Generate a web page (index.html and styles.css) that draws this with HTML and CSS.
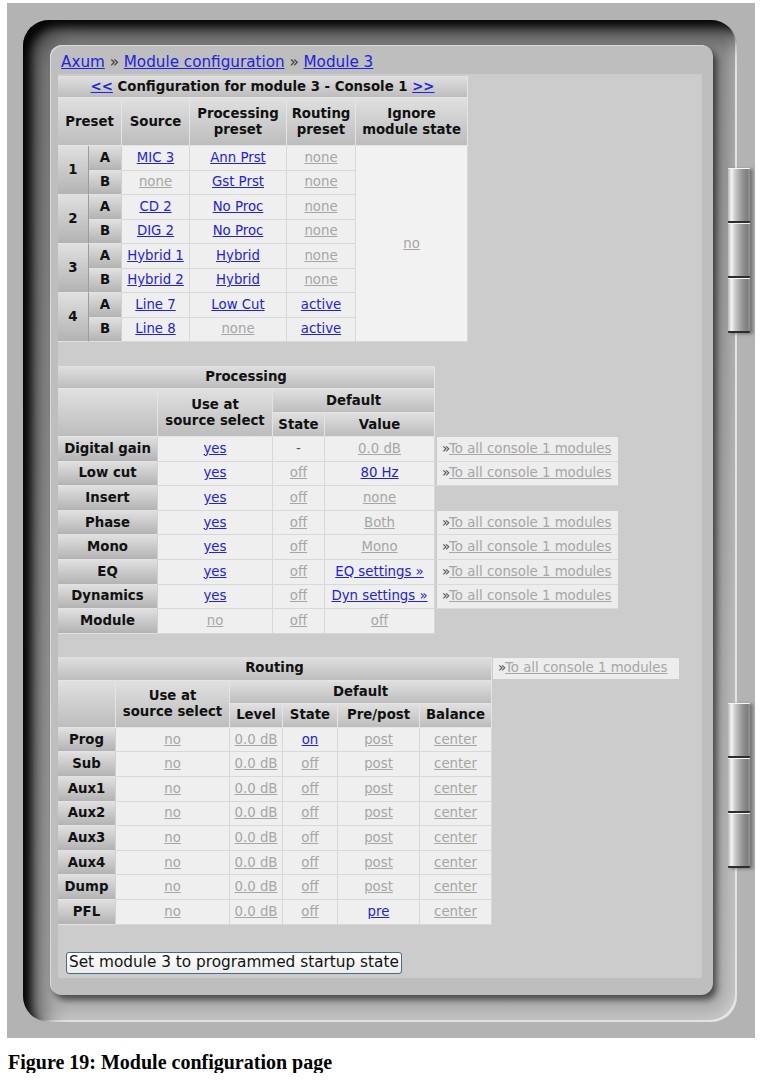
FILE: index.html
```html
<!DOCTYPE html>
<html>
<head>
<meta charset="utf-8">
<title>Module configuration</title>
<link rel="stylesheet" href="styles.css">
</head>
<body>
<div class="shot">
  <div class="frame">
    <div class="panel">
      <div class="crumb"><a class="lk">Axum</a> » <a class="lk">Module configuration</a> » <a class="lk">Module 3</a></div>
      <div class="content">
        <table class="t t1">
          <colgroup><col class="w31"><col class="w33"><col class="w68"><col class="w97"><col class="w69"><col class="w112"></colgroup>
          <tr class="r22"><th colspan="6" class="hd"><a class="lk">&lt;&lt;</a> Configuration for module 3 - Console 1 <a class="lk">&gt;&gt;</a></th></tr>
          <tr class="r48"><th colspan="2" class="hd">Preset</th><th class="hd">Source</th><th class="hd">Processing<br>preset</th><th class="hd">Routing<br>preset</th><th class="hd">Ignore<br>module state</th></tr>
          <tr class="r1"><th rowspan="2" class="rh num">1</th><th class="rh">A</th><td><a class="lk">MIC 3</a></td><td><a class="lk">Ann Prst</a></td><td><a class="dis">none</a></td><td rowspan="8" class="ign"><a class="dis">no</a></td></tr>
          <tr class="r1"><th class="rh">B</th><td><a class="dis">none</a></td><td><a class="lk">Gst Prst</a></td><td><a class="dis">none</a></td></tr>
          <tr class="r1"><th rowspan="2" class="rh num">2</th><th class="rh">A</th><td><a class="lk">CD 2</a></td><td><a class="lk">No Proc</a></td><td><a class="dis">none</a></td></tr>
          <tr class="r1"><th class="rh">B</th><td><a class="lk">DIG 2</a></td><td><a class="lk">No Proc</a></td><td><a class="dis">none</a></td></tr>
          <tr class="r1"><th rowspan="2" class="rh num">3</th><th class="rh">A</th><td><a class="lk">Hybrid 1</a></td><td><a class="lk">Hybrid</a></td><td><a class="dis">none</a></td></tr>
          <tr class="r1"><th class="rh">B</th><td><a class="lk">Hybrid 2</a></td><td><a class="lk">Hybrid</a></td><td><a class="dis">none</a></td></tr>
          <tr class="r1"><th rowspan="2" class="rh num">4</th><th class="rh">A</th><td><a class="lk">Line 7</a></td><td><a class="lk">Low Cut</a></td><td><a class="lk">active</a></td></tr>
          <tr class="r1"><th class="rh">B</th><td><a class="lk">Line 8</a></td><td><a class="dis">none</a></td><td><a class="lk">active</a></td></tr>
        </table>

        <table class="t t2">
          <colgroup><col class="w100"><col class="w115"><col class="w52"><col class="w110"><col class="w183"></colgroup>
          <tr class="r23"><th colspan="4" class="hd">Processing</th></tr>
          <tr class="r24"><th rowspan="2" class="hd"></th><th rowspan="2" class="hd">Use at<br>source select</th><th colspan="2" class="hd">Default</th></tr>
          <tr class="r24"><th class="hd">State</th><th class="hd">Value</th></tr>
          <tr class="r2"><th class="rh">Digital gain</th><td><a class="lk">yes</a></td><td class="txt">-</td><td><a class="dis">0.0 dB</a></td><td class="toall"><span class="ra">»</span><a class="dis">To all console 1 modules</a></td></tr>
          <tr class="r2"><th class="rh">Low cut</th><td><a class="lk">yes</a></td><td><a class="dis">off</a></td><td><a class="lk">80 Hz</a></td><td class="toall"><span class="ra">»</span><a class="dis">To all console 1 modules</a></td></tr>
          <tr class="r2"><th class="rh">Insert</th><td><a class="lk">yes</a></td><td><a class="dis">off</a></td><td><a class="dis">none</a></td><td class="blank"></td></tr>
          <tr class="r2"><th class="rh">Phase</th><td><a class="lk">yes</a></td><td><a class="dis">off</a></td><td><a class="dis">Both</a></td><td class="toall"><span class="ra">»</span><a class="dis">To all console 1 modules</a></td></tr>
          <tr class="r2"><th class="rh">Mono</th><td><a class="lk">yes</a></td><td><a class="dis">off</a></td><td><a class="dis">Mono</a></td><td class="toall"><span class="ra">»</span><a class="dis">To all console 1 modules</a></td></tr>
          <tr class="r2"><th class="rh">EQ</th><td><a class="lk">yes</a></td><td><a class="dis">off</a></td><td><a class="lk">EQ settings »</a></td><td class="toall"><span class="ra">»</span><a class="dis">To all console 1 modules</a></td></tr>
          <tr class="r2"><th class="rh">Dynamics</th><td><a class="lk">yes</a></td><td><a class="dis">off</a></td><td><a class="lk">Dyn settings »</a></td><td class="toall"><span class="ra">»</span><a class="dis">To all console 1 modules</a></td></tr>
          <tr class="r2"><th class="rh">Module</th><td><a class="dis">no</a></td><td><a class="dis">off</a></td><td><a class="dis">off</a></td><td class="blank"></td></tr>
        </table>

        <table class="t t3">
          <colgroup><col class="w58"><col class="w114"><col class="w53"><col class="w55"><col class="w82"><col class="w72"><col class="w187"></colgroup>
          <tr class="r24"><th colspan="6" class="hd">Routing</th><td class="toall top"><span class="ra">»</span><a class="dis">To all console 1 modules</a></td></tr>
          <tr class="r23"><th rowspan="2" class="hd"></th><th rowspan="2" class="hd">Use at<br>source select</th><th colspan="4" class="hd">Default</th></tr>
          <tr class="r24"><th class="hd">Level</th><th class="hd">State</th><th class="hd">Pre/post</th><th class="hd">Balance</th></tr>
          <tr class="r2"><th class="rh">Prog</th><td><a class="dis">no</a></td><td><a class="dis">0.0 dB</a></td><td><a class="lk">on</a></td><td><a class="dis">post</a></td><td><a class="dis">center</a></td></tr>
          <tr class="r2"><th class="rh">Sub</th><td><a class="dis">no</a></td><td><a class="dis">0.0 dB</a></td><td><a class="dis">off</a></td><td><a class="dis">post</a></td><td><a class="dis">center</a></td></tr>
          <tr class="r2"><th class="rh">Aux1</th><td><a class="dis">no</a></td><td><a class="dis">0.0 dB</a></td><td><a class="dis">off</a></td><td><a class="dis">post</a></td><td><a class="dis">center</a></td></tr>
          <tr class="r2"><th class="rh">Aux2</th><td><a class="dis">no</a></td><td><a class="dis">0.0 dB</a></td><td><a class="dis">off</a></td><td><a class="dis">post</a></td><td><a class="dis">center</a></td></tr>
          <tr class="r2"><th class="rh">Aux3</th><td><a class="dis">no</a></td><td><a class="dis">0.0 dB</a></td><td><a class="dis">off</a></td><td><a class="dis">post</a></td><td><a class="dis">center</a></td></tr>
          <tr class="r2"><th class="rh">Aux4</th><td><a class="dis">no</a></td><td><a class="dis">0.0 dB</a></td><td><a class="dis">off</a></td><td><a class="dis">post</a></td><td><a class="dis">center</a></td></tr>
          <tr class="r2"><th class="rh">Dump</th><td><a class="dis">no</a></td><td><a class="dis">0.0 dB</a></td><td><a class="dis">off</a></td><td><a class="dis">post</a></td><td><a class="dis">center</a></td></tr>
          <tr class="r2"><th class="rh">PFL</th><td><a class="dis">no</a></td><td><a class="dis">0.0 dB</a></td><td><a class="dis">off</a></td><td><a class="lk">pre</a></td><td><a class="dis">center</a></td></tr>
        </table>

        <button class="btn" type="button">Set module 3 to programmed startup state</button>
      </div>
    </div>
  </div>
  <div class="hinge h1"><div class="seg"></div><div class="seg"></div><div class="seg"></div></div>
  <div class="hinge h2"><div class="seg"></div><div class="seg"></div><div class="seg"></div></div>
</div>
<div class="cap">Figure 19: Module configuration page</div>
</body>
</html>
```

FILE: styles.css
```css
body {
  margin: 0;
  background: #ffffff;
  font-family: "DejaVu Sans", Verdana, sans-serif;
}

.shot {
  position: relative;
  margin: 3px 0 0 7px;
  width: 748px;
  height: 1035px;
  box-sizing: border-box;
  padding: 17px 0 0 16px;
  background: #b3b3b3;
}

.frame {
  width: 714px;
  height: 1002px;
  box-sizing: border-box;
  padding: 25px 0 0 27px;
  border-radius: 26px;
  background: linear-gradient(to bottom, #8a8a8a 0, #a6a6a6 60%, #b4b4b4 100%);
  box-shadow:
    inset 10px 9px 10px -2px rgba(0, 0, 0, 0.95),
    inset 20px 18px 22px rgba(0, 0, 0, 0.45),
    inset -2px -2px 0 0 #e6e6e6,
    inset -7px -7px 8px rgba(255, 255, 255, 0.25);
}

.panel {
  width: 663px;
  height: 950px;
  box-sizing: border-box;
  padding: 0 11px 0 8px;
  border-radius: 12px;
  background: #bebebe;
  box-shadow:
    4px 5px 7px rgba(0, 0, 0, 0.6),
    inset 1px 1px 0 #dadada;
}

.crumb {
  height: 29px;
  box-sizing: border-box;
  padding: 8px 0 0 3px;
  font-size: 15.2px;
  line-height: 18px;
  color: #333333;
  white-space: nowrap;
}

.content {
  height: 904px;
  box-sizing: border-box;
  padding-top: 1px;
  background: #cccccc;
}

.lk {
  color: #2222dd;
  text-decoration: underline;
}

.dis {
  color: #a6a6a6;
  text-decoration: underline;
}

.t {
  border-collapse: separate;
  border-spacing: 0;
  table-layout: fixed;
  font-size: 13.3px;
  line-height: 16px;
}

.t th,
.t td {
  padding: 0 2px;
  text-align: center;
  vertical-align: middle;
  white-space: nowrap;
  overflow: hidden;
}

.t td {
  background: #efefef;
  border-right: 1px solid #d8d8d8;
  border-bottom: 1px solid #d8d8d8;
  color: #555555;
}

.t th {
  font-weight: bold;
  color: #111111;
}

.hd {
  background: linear-gradient(to bottom, #e0e0e0, #bdbdbd);
  border-right: 1px solid #e4e4e4;
  border-bottom: 1px solid #e4e4e4;
}

.rh {
  background: linear-gradient(to bottom, #e0e0e0, #b3b3b3);
  border-bottom: 1px solid #e2e2e2;
  border-right: 1px solid #d0d0d0;
}

.rh.num {
  border-right: 1px solid #9c9c9c;
}

.t td.ign {
  background: #f2f2f2;
}

.t td.toall {
  background: #ededed;
  border-left: 2px solid #cccccc;
  border-right: 0;
  border-bottom: 1px solid #dadada;
  text-align: left;
  padding-left: 5px;
}

.t td.toall.top {
  border-left: 1px solid #cccccc;
  border-top: 1px solid #cccccc;
  border-bottom: 2px solid #cccccc;
}

.t td.blank {
  background: transparent;
  border: 0;
}

.ra {
  color: #444444;
}

.w31 { width: 31px; }
.w33 { width: 33px; }
.w68 { width: 68px; }
.w97 { width: 97px; }
.w69 { width: 69px; }
.w112 { width: 112px; }
.w100 { width: 100px; }
.w115 { width: 115px; }
.w52 { width: 52px; }
.w110 { width: 110px; }
.w183 { width: 183px; }
.w58 { width: 58px; }
.w114 { width: 114px; }
.w53 { width: 53px; }
.w55 { width: 55px; }
.w82 { width: 82px; }
.w72 { width: 72px; }
.w187 { width: 187px; }

.t1 { width: 410px; margin-top: 1px; }
.t2 { width: 560px; margin-top: 24px; }
.t3 { width: 621px; margin-top: 23px; }

.r22 { height: 22px; }
.r23 { height: 23px; }
.r24 { height: 24px; }
.r48 { height: 48px; }
.r1 { height: 24.5px; }
.r2 { height: 24.6px; }

.btn {
  display: block;
  margin: 27px 0 0 8px;
  height: 22px;
  padding: 0 2px;
  box-sizing: border-box;
  border: 1px solid #4a6888;
  border-radius: 3px;
  background: linear-gradient(to bottom, #ffffff, #ececec);
  font-family: "DejaVu Sans", Verdana, sans-serif;
  font-size: 15.3px;
  line-height: 19px;
  color: #111111;
  white-space: nowrap;
}

.hinge {
  position: absolute;
  left: 721px;
  width: 22px;
  box-shadow: 3px 1px 3px rgba(0, 0, 0, 0.35);
}

.h1 { top: 165px; }
.h2 { top: 700px; }

.seg {
  height: 52px;
  border-top: 1px solid #f6f6f6;
  border-bottom: 2px solid #2c2c2c;
  border-radius: 1px;
  background: linear-gradient(to right, #b8b8b8 0, #f4f4f4 16%, #c8c8c8 34%, #9c9c9c 60%, #7e7e7e 86%, #949494 100%);
}

.cap {
  margin: 13px 0 0 8px;
  font-family: "Liberation Serif", "Times New Roman", serif;
  font-weight: bold;
  font-size: 20px;
  line-height: 22px;
  color: #000000;
}
```
